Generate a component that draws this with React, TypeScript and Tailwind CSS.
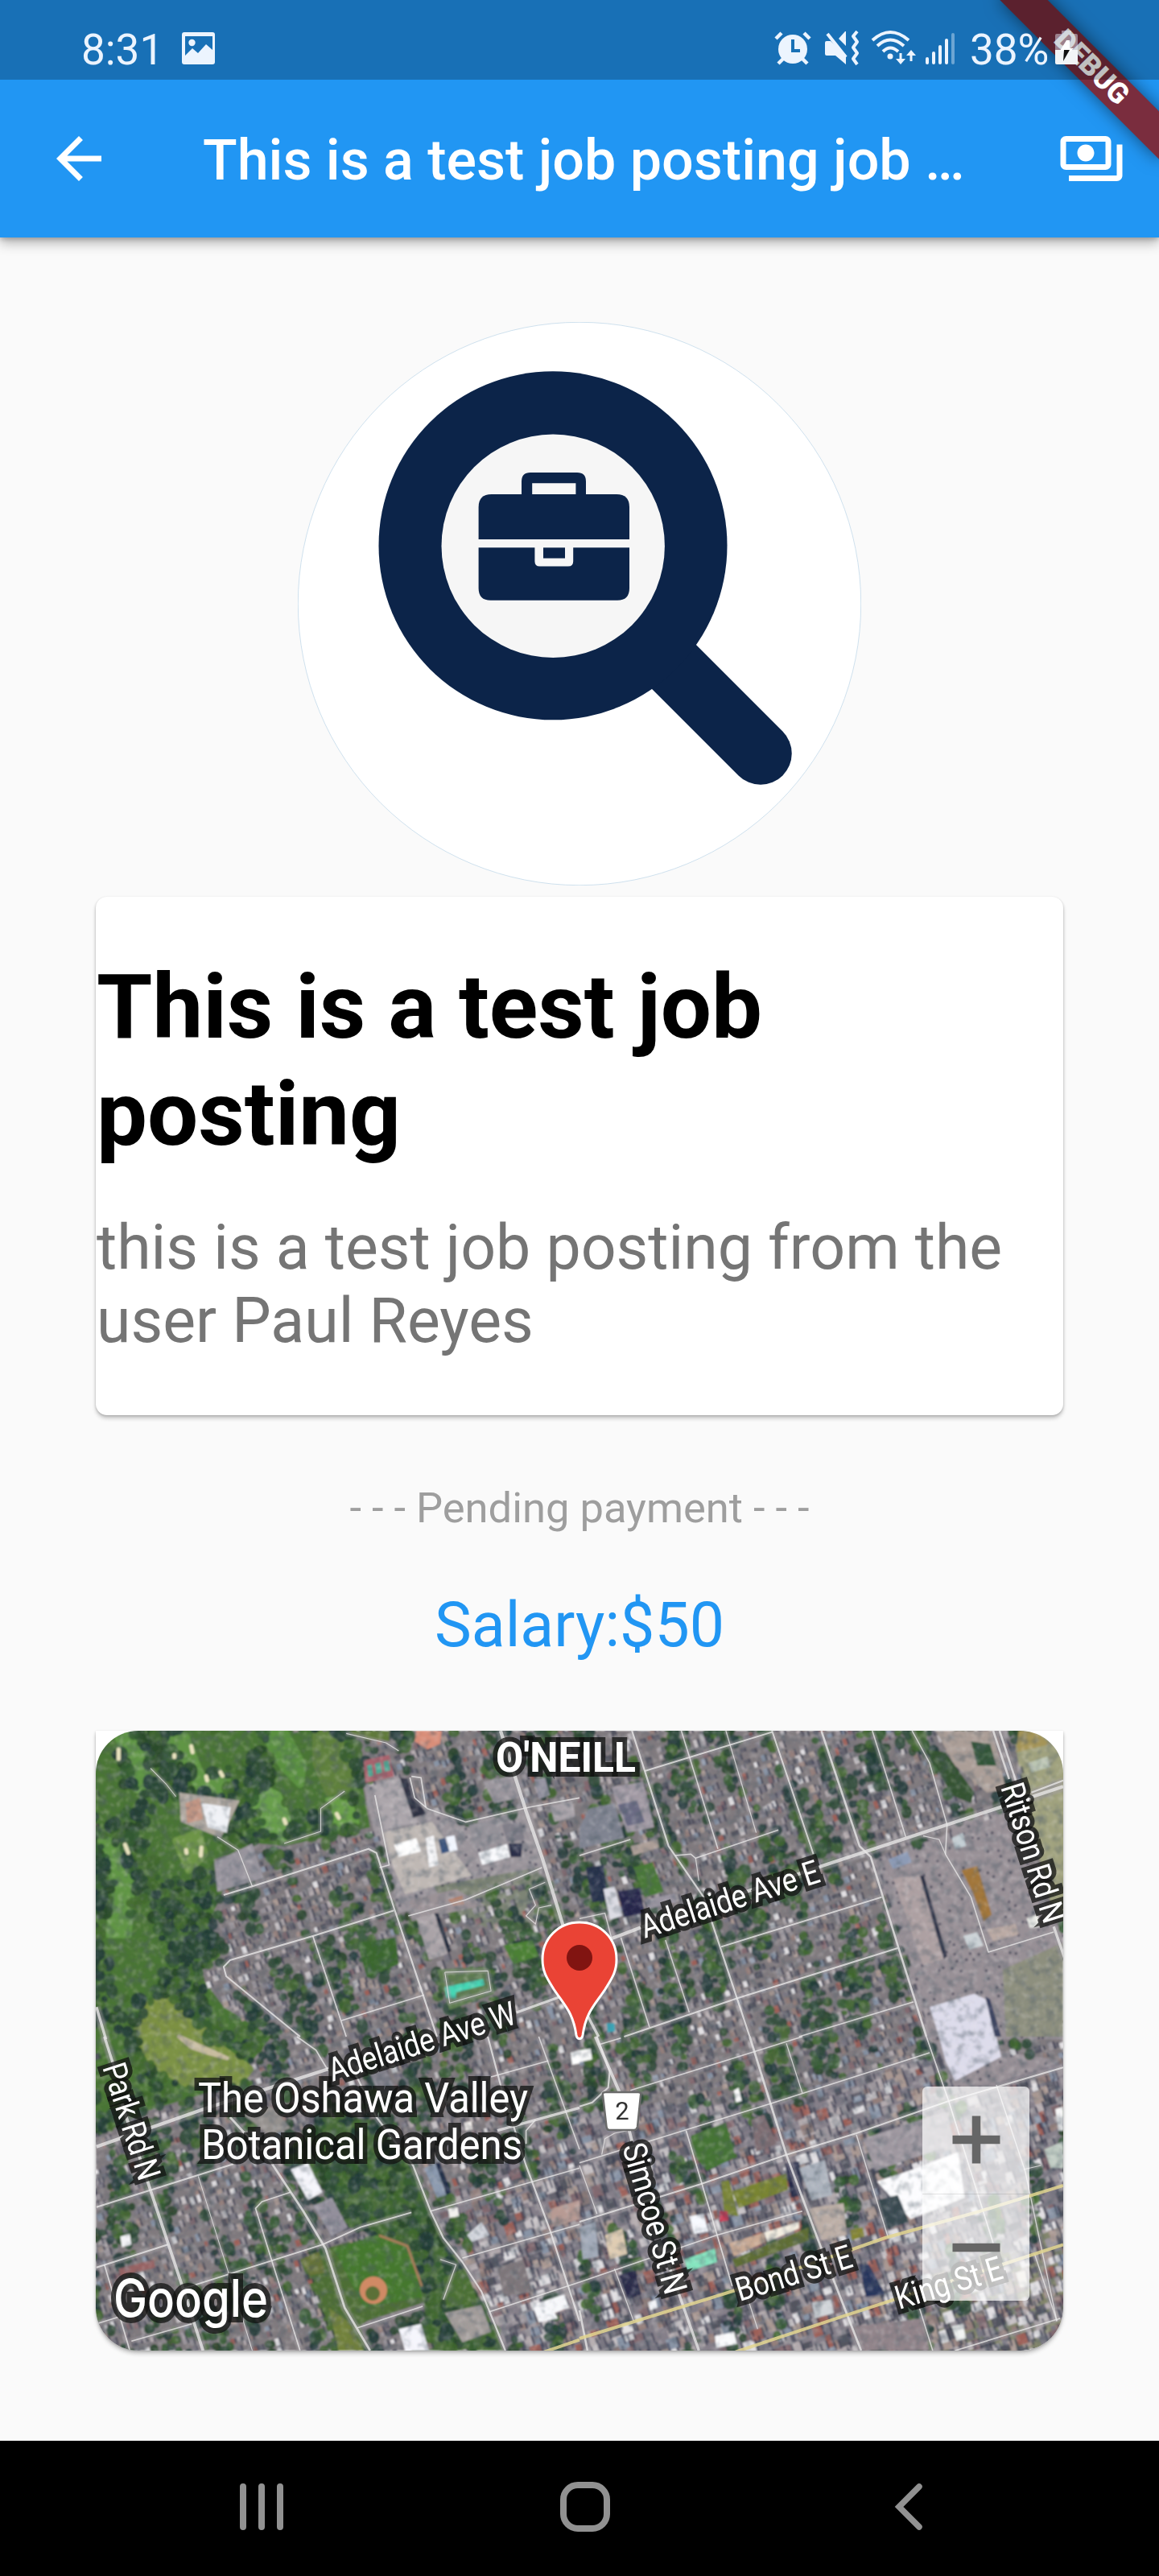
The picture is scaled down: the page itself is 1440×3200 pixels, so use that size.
import React from "react";

type Pt = [number, number];

const MAP = { x: 119, y: 2150, w: 1202, h: 770 };

/* The map is surveyed in four sheets, each with its own local grid. */
const SX = 1 / 2.529;
const SY = 1 / 3;
const SHEETS = {
  nw: [100, 2130],
  ne: [720, 2130],
  sw: [100, 2530],
  se: [720, 2530],
} as const;
type SheetId = keyof typeof SHEETS;

const place = (sheet: SheetId, pts: string): Pt[] =>
  pts.split(" ").map((p) => {
    const [x, y] = p.split(",").map(Number);
    return [SHEETS[sheet][0] + x * SX, SHEETS[sheet][1] + y * SY];
  });

const join = (pts: Pt[]) => pts.map((p) => p[0].toFixed(1) + "," + p[1].toFixed(1)).join(" ");

const inside = ([x, y]: Pt, poly: Pt[]) => {
  let hit = false;
  for (let i = 0, j = poly.length - 1; i < poly.length; j = i++) {
    const [xi, yi] = poly[i];
    const [xj, yj] = poly[j];
    if (yi > y !== yj > y && x < ((xj - xi) * (y - yi)) / (yj - yi) + xi) hit = !hit;
  }
  return hit;
};

const random = (seed: number) => () => {
  seed = (seed * 1664525 + 1013904223) >>> 0;
  return seed / 4294967296;
};

const golf: Pt[] = [
  ...place("nw", "40,50 860,50 885,250 910,420 640,490 560,480 420,540 440,680 400,780 440,900 370,960 450,1090 600,1200"),
  ...place("sw", "560,60 480,180 200,280 40,380"),
];
const creek = place("sw", "640,440 740,300 930,310 1050,480 1100,650 1190,840 1280,1030 1330,1170 1090,1170 1080,1000 1060,860 940,740 840,710 760,560");
const ballpark = place("sw", "690,830 770,790 930,735 1040,790 1080,990 900,1060 880,1080 900,1170 800,1170");
const plaza: Pt[] = [...place("ne", "920,540 1150,450 1160,410 1380,330 1420,600 1520,830 1520,1210 1090,1210"), ...place("se", "1520,90 1170,230 1090,0")];
const field = place("ne", "1360,50 1530,50 1530,800 1480,700 1400,330");
const schools = place("nw", "890,260 1020,230 1090,350 1210,400 1410,345 1450,530 1460,570 1230,660 1000,740 920,430");
const drab = place("se", "1060,900 1530,700 1530,1180 1110,1180");
const downtown: Pt[] = [...place("se", "0,260 560,250 1090,60 1530,100 1530,1180 0,1180"), ...place("sw", "1300,1170 1200,840 1100,650")];
const court = place("nw", "1110,640 1440,570 1500,770 1360,830 1160,740");

const FAIRWAY_SHAPES: [string, string][] = [
  ["110,60 180,80 215,200 215,260 180,280 150,180", "#5f9544"],
  ["570,60 640,60 700,190 690,260 640,200", "#5a9040"],
  ["740,70 800,60 845,180 840,270 780,290 740,180", "#5f803d"],
  ["255,60 330,80 380,230 460,240 455,290 370,270 300,120", "#619545"],
  ["560,270 620,300 650,390 640,460 590,440 550,350", "#689e4c"],
  ["780,320 840,320 865,400 810,430 775,390", "#689f47"],
  ["60,450 130,500 160,640 150,820 90,820 110,640", "#609544"],
  ["300,470 370,440 390,520 340,580", "#6d9446"],
  ["210,1080 270,1060 330,1120 420,1200 170,1200", "#7c9042"],
];
const MEADOW_SHAPES: [string, string][] = [
  ["170,0 400,0 540,120 500,180 330,180 230,110", "#7c9244"],
  ["310,0 460,80 400,60 350,40", "#c8bc9f"],
];
const meadows = [
  ...FAIRWAY_SHAPES.map(([pts]) => place("nw", pts)),
  ...MEADOW_SHAPES.map(([pts]) => place("sw", pts)),
];

const ROOFS = ["#9c969c", "#7a7782", "#b3aaad", "#65636e", "#947f7b", "#53545f", "#a99892", "#c6c1c4", "#82696f", "#8994a6", "#e2e0e3", "#9d6058"];
const LEAVES = ["#264429", "#345c31", "#1f3836", "#42692f", "#2c4a36"];

function scatter() {
  const rnd = random(77);
  const roofs: string[] = ROOFS.map(() => "");
  const leaves: string[] = LEAVES.map(() => "");
  const shade: string[] = [""];
  const a = (-18.5 * Math.PI) / 180;
  const c = Math.cos(a);
  const s = Math.sin(a);
  const blob = (x: number, y: number, r: number, k: number) => {
    const r2 = r * (0.7 + rnd() * 0.6);
    leaves[k] += `M${(x - r).toFixed(1)} ${y.toFixed(1)}a${r.toFixed(1)} ${r2.toFixed(1)} 0 1 0 ${(2 * r).toFixed(1)} 0a${r.toFixed(1)} ${r2.toFixed(1)} 0 1 0 ${(-2 * r).toFixed(1)} 0`;
  };
  for (let u = -760; u < 760; u += 9) {
    for (let v = -640; v < 640; v += 11) {
      const ju = u + rnd() * 6;
      const jv = v + rnd() * 8;
      const x = 720 + ju * c - jv * s;
      const y = 2535 + ju * s + jv * c;
      if (x < 112 || x > 1328 || y < 2142 || y > 2928) continue;
      const p: Pt = [x, y];
      const patch = Math.sin(ju / 9 + Math.sin(jv / 60) * 1.5) + Math.sin(jv / 31 + ju / 53) * 0.9;
      if (inside(p, golf)) {
        if (meadows.some((m) => inside(p, m))) continue;
        const wood = Math.sin(x / 21 + y / 60) + Math.sin(y / 27 - x / 50) + (y > 2330 && x > 190 ? 0.9 : 0);
        if (wood + rnd() * 0.9 > 0.45) blob(x, y, 4 + rnd() * 6, Math.floor(rnd() * 5));
        continue;
      }
      if (inside(p, ballpark) || inside(p, field)) continue;
      if (inside(p, creek)) {
        if (rnd() < 0.72) blob(x, y, 4 + rnd() * 6, Math.floor(rnd() * 5));
        continue;
      }
      if (inside(p, plaza) || inside(p, schools)) {
        if (rnd() < 0.35) shade[0] += `M${x.toFixed(1)} ${y.toFixed(1)}l3 -1l1 3l-3 1z`;
        continue;
      }
      const urban = inside(p, downtown);
      const k = Math.floor(Math.pow(rnd(), 1.5) * ROOFS.length);
      const w = (urban ? 6 : 3.5) + rnd() * (urban ? 9 : 3.5);
      const h = (urban ? 7 : 5) + rnd() * (urban ? 9 : 5);
      if (rnd() < 0.8) {
        roofs[k] += `M${x.toFixed(1)} ${y.toFixed(1)}l${(w * c).toFixed(1)} ${(w * s).toFixed(1)}l${(-h * s).toFixed(1)} ${(h * c).toFixed(1)}l${(-w * c).toFixed(1)} ${(-w * s).toFixed(1)}z`;
        shade[0] += `M${(x + w * c).toFixed(1)} ${(y + w * s).toFixed(1)}l2.4 -.6l${(-h * s).toFixed(1)} ${(h * c).toFixed(1)}l-2.4 .6z`;
      }
      const green = inside(p, court) ? 0.3 : urban ? 1.6 : inside(p, drab) ? 1.2 : 0.6;
      if (patch + rnd() * 0.8 > green) blob(x + 3, y + 3, 3.5 + rnd() * 4.5, Math.floor(rnd() * 5));
    }
  }
  return { roofs, leaves, shade };
}

const TEXTURE = scatter();

type Area = [SheetId, string, string];

const AREAS: Area[] = [
  ["nw", "840,60 970,60 970,100 880,90", "#617a3b"],
  ["nw", "1055,60 1135,60 1130,110 1090,130 1050,100", "#d98e79"],
  ["nw", "890,170 970,150 985,230 895,255", "#a8636d"],
  ["nw", "900,190 915,185 920,228 905,232", "#4fa592"],
  ["nw", "925,182 942,178 948,215 930,222", "#4fa592"],
  ["nw", "952,174 968,170 974,208 956,213", "#4fa592"],
  ["nw", "915,265 1010,235 1060,400 955,430", "#aca6ab"],
  ["nw", "1003,235 1030,238 1085,370 1045,385", "#2f3142"],
  ["nw", "310,290 500,320 460,420 440,460 400,440 315,400", "#afa79f"],
  ["nw", "380,330 472,345 460,440 400,420", "#f1f3f7"],
  ["nw", "330,330 375,310 385,390 335,405", "#c39684"],
  ["nw", "420,550 540,480 575,610 430,660", "#98949d"],
  ["nw", "945,440 1105,400 1230,600 1020,670 980,560", "#bfb8b4"],
  ["nw", "985,485 1055,460 1070,510 1000,530", "#ffffff"],
  ["nw", "1085,460 1110,450 1125,560 1095,570", "#f8f8fa"],
  ["nw", "1125,465 1145,460 1160,510 1135,518", "#38527e"],
  ["nw", "1148,455 1175,450 1185,505 1160,512", "#f2f6ff"],
  ["nw", "1250,515 1340,482 1350,530 1262,560", "#fafbfe"],
  ["nw", "1345,480 1388,480 1385,530 1352,530", "#2b2e49"],
  ["nw", "1325,410 1385,400 1395,465 1340,475", "#807e88"],
  ["nw", "1220,410 1310,390 1330,470 1240,500", "#959299"],
  ["nw", "1265,250 1360,225 1385,310 1300,330", "#9b969d"],
  ["nw", "1425,240 1460,235 1475,300 1440,315", "#9493a0"],
  ["nw", "1475,340 1545,320 1555,380 1490,400", "#a9a3a9"],
  ["nw", "1035,690 1180,650 1270,710 1040,770", "#9b9296"],
  ["nw", "1155,690 1200,675 1205,705 1170,712", "#b57f68"],
  ["nw", "1055,755 1110,740 1155,890 1095,915", "#aaa3a7"],
  ["nw", "1112,740 1125,740 1165,880 1155,890", "#232a3c"],
  ["nw", "1330,860 1420,840 1440,900 1360,930", "#4c8034"],
  ["nw", "1120,950 1270,940 1300,1040 1160,1100", "#5e7c50"],
  ["nw", "1145,1015 1265,985 1270,1008 1180,1035 1180,1058 1150,1055", "#44d6b4"],
  ["nw", "870,850 990,830 1000,930 900,980", "#3a662e"],
  ["ne", "100,270 200,250 235,420 150,440", "#a199a3"],
  ["ne", "120,335 180,320 205,400 150,415", "#6a6b83"],
  ["ne", "30,350 110,330 140,460 0,500 0,420", "#808491"],
  ["ne", "20,570 75,560 90,690 40,700", "#26304a"],
  ["ne", "120,660 190,645 205,740 140,755", "#25254a"],
  ["ne", "75,650 110,640 135,750 95,765", "#dcdce4"],
  ["ne", "170,570 230,550 265,660 205,680", "#4a7837"],
  ["ne", "205,690 300,665 305,700 215,725", "#9a95a0"],
  ["ne", "160,490 245,465 250,495 170,525", "#ab9d96"],
  ["ne", "1120,60 1300,60 1340,280 1280,290 1180,190", "#ab9e97"],
  ["ne", "1090,130 1150,140 1240,290 1230,330 1170,300", "#355332"],
  ["ne", "1230,100 1290,110 1310,190 1250,190", "#335539"],
  ["ne", "1410,180 1470,155 1480,195 1420,215", "#bbc5b2"],
  ["ne", "1380,60 1430,60 1480,110 1370,140", "#a59558"],
  ["ne", "970,540 1030,510 1045,550 985,575", "#8d9bb6"],
  ["ne", "985,610 1070,600 1145,910 1080,935", "#ada0a2"],
  ["ne", "1070,600 1082,600 1155,900 1145,912", "#2b3045"],
  ["ne", "1200,580 1250,565 1295,745 1270,770 1235,660", "#a1763a"],
  ["ne", "1170,460 1205,440 1215,490 1180,500", "#c3ced3"],
  ["ne", "1205,825 1250,810 1270,860 1225,875", "#ccd3d7"],
  ["ne", "1280,800 1370,780 1380,820 1300,845", "#bbaaa4"],
  ["ne", "1405,760 1440,745 1445,790 1415,795", "#f6f6f0"],
  ["ne", "1100,1090 1240,1040 1275,1060 1320,1200 1130,1200", "#dddceb"],
  ["ne", "1275,1050 1290,1060 1325,1200 1305,1200", "#3d4461"],
  ["ne", "1330,950 1520,850 1520,1200 1340,1200", "#8d8f7e"],
  ["ne", "85,1150 110,1150 112,1180 88,1185", "#3aa3b5"],
  ["sw", "660,495 715,470 760,580 715,610", "#f6f6fc"],
  ["sw", "730,630 790,600 840,710 790,745", "#938f9b"],
  ["sw", "510,290 600,260 660,340 600,370", "#95918e"],
  ["sw", "910,140 960,120 990,200 940,220", "#807f89"],
  ["sw", "1080,490 1120,470 1150,590 1120,600", "#8c9aaf"],
  ["sw", "1115,470 1130,470 1165,580 1150,590", "#1f2b46"],
  ["sw", "795,790 930,740 1030,780 1075,970 890,1010", "#45782e"],
  ["sw", "120,865 230,830 235,860 125,895", "#966364"],
  ["sw", "125,745 155,735 160,775 130,785", "#f4f4f7"],
  ["sw", "1145,1030 1260,1000 1290,1100 1200,1140", "#a29c9a"],
  ["sw", "1140,900 1210,860 1250,990 1150,1010", "#4c7034"],
  ["sw", "1000,1090 1070,1070 1095,1170 1020,1170", "#f6f6fd"],
  ["sw", "690,830 750,800 770,880 720,890", "#667338"],
  ["sw", "780,1010 840,1060 890,1170 810,1170", "#71813b"],
  ["sw", "1420,1000 1520,960 1535,1010 1490,1030 1500,1050 1440,1065", "#f8f9fc"],
  ["sw", "1215,740 1260,690 1285,740 1230,765", "#d5d8df"],
  ["sw", "1310,860 1390,830 1420,950 1330,970", "#7d767a"],
  ["sw", "1155,640 1185,635 1190,670 1160,675", "#f4f2ef"],
  ["sw", "1205,320 1228,315 1232,345 1210,350", "#f3eeea"],
  ["sw", "1480,640 1568,610 1568,680 1480,710", "#b79a93"],
  ["sw", "1540,60 1568,50 1568,100 1545,105", "#ffffff"],
  ["se", "0,50 35,45 40,85 0,95", "#fafafa"],
  ["se", "485,200 500,190 510,240 492,245", "#fafafa"],
  ["se", "350,370 460,320 490,450 400,500 350,430", "#457334"],
  ["se", "540,310 580,290 620,400 555,430", "#7e6d72"],
  ["se", "645,470 690,465 705,590 665,600", "#242846"],
  ["se", "690,490 770,460 795,590 730,610", "#adb4be"],
  ["se", "445,540 470,535 500,670 455,660", "#798437"],
  ["se", "480,575 650,510 655,570 500,640", "#798431"],
  ["se", "440,650 465,650 468,685 440,690", "#c52f4a"],
  ["se", "470,770 580,730 585,765 485,820", "#cbab95"],
  ["se", "580,730 690,690 690,715 590,765", "#f5efe2"],
  ["se", "480,830 720,710 720,760 490,860", "#5e6d34"],
  ["se", "330,830 425,790 432,840 340,875", "#86e6c0"],
  ["se", "345,670 390,660 405,725 360,735", "#f8faff"],
  ["se", "80,740 135,715 150,810 95,830", "#dfccb2"],
  ["se", "120,890 175,870 195,960 150,980", "#2a2b49"],
  ["se", "0,710 50,690 60,820 10,830", "#a4acba"],
  ["se", "890,380 1150,280 1180,400 930,500", "#9f98a0"],
  ["se", "935,540 1060,490 1190,430 1210,600 1040,680", "#fdfdff"],
  ["se", "935,610 1000,590 1035,690 960,720", "#39494f"],
  ["se", "720,640 830,620 840,740 760,760", "#bcaea6"],
  ["se", "850,720 890,710 895,745 855,760", "#858636"],
  ["se", "860,1080 1080,1050 1100,1170 890,1170", "#91848a"],
  ["se", "730,990 790,980 800,1030 740,1050", "#d1d5d9"],
  ["se", "425,1115 485,1100 495,1145 430,1160", "#fafbfd"],
  ["se", "1170,1080 1205,1070 1215,1125 1185,1135", "#f3f5f3"],
  ["se", "1370,880 1400,870 1410,930 1385,935", "#e6e0d8"],
  ["se", "1460,420 1520,390 1520,490 1480,490", "#c0ccc3"],
  ["se", "1495,270 1520,260 1520,350 1505,350", "#f8f8f8"],
  ["se", "1130,0 1310,0 1325,75 1180,165 1150,90", "#dddceb"],
  ["se", "215,990 240,980 245,1010 222,1020", "#f3f5f9"],
  ["se", "880,850 910,850 960,960 900,970", "#28355c"],
];

const BUNKERS = ["295,150 295,158", "348,118 352,140", "395,230 398,245", "440,215 446,228", "640,390 645,405", "805,370 812,385", "332,505 333,515", "380,495 378,525", "120,130 120,165", "140,485 150,515"];

type Road = [SheetId, number, string];

const ROADS: Road[] = [
  ["nw", 5, "1320,60 1400,360 1450,530 1520,800"],
  ["nw", 2.6, "450,672 540,640 905,500 930,515 985,720 1075,1040 1120,1200"],
  ["nw", 2, "1035,235 1050,310 1090,350 1210,400 1410,345 1568,310"],
  ["nw", 2, "1040,230 1070,235 1085,345"],
  ["nw", 2.4, "985,730 730,825 470,915 450,940 458,975 690,1200"],
  ["nw", 2, "730,825 835,1200"],
  ["nw", 2, "820,1140 1080,1045"],
  ["nw", 2, "1030,750 1210,690 1450,570"],
  ["nw", 1.5, "540,640 495,505 430,455"],
  ["nw", 3.6, "1370,1110 1510,1050"],
  ["nw", 4, "50,1090 80,1210"],
  ["nw", 1.2, "640,480 755,435 755,350 830,285"],
  ["nw", 1.2, "220,200 270,260 300,305"],
  ["nw", 1.4, "835,70 960,105 1000,135"],
  ["nw", 1.4, "1460,625 1410,650 1430,710 1400,750 1430,780 1440,720 1480,710"],
  ["nw", 1.2, "1145,960 1280,955 1290,1030 1160,1075 1145,960"],
  ["nw", 2, "925,300 970,560 940,570"],
  ["ne", 2.6, "165,60 205,210 280,490 390,680 490,1040 535,1200"],
  ["ne", 1.8, "320,60 435,500"],
  ["ne", 1.4, "460,60 555,440"],
  ["ne", 2.2, "205,210 605,65"],
  ["ne", 1.8, "300,525 350,520 365,535 625,430"],
  ["ne", 1.4, "365,535 375,620"],
  ["ne", 2.4, "605,60 735,520"],
  ["ne", 3, "760,60 880,490 915,530 1000,860 1090,1200"],
  ["ne", 1.8, "920,60 1025,455"],
  ["ne", 1.8, "1045,60 1100,180 1155,410 1150,520 1230,680 1285,885 1490,810"],
  ["ne", 1.4, "1080,452 1130,465 1150,520"],
  ["ne", 5, "100,835 200,790 760,565 1130,420 1520,268"],
  ["ne", 3, "1300,60 1350,240"],
  ["ne", 3, "1320,60 1372,250"],
  ["ne", 4, "1490,790 1525,910"],
  ["ne", 2.4, "1420,290 1520,245"],
  ["ne", 2.2, "445,865 950,680"],
  ["ne", 2.6, "140,1200 500,1055 1000,870"],
  ["ne", 2, "690,1200 1050,1070"],
  ["ne", 1.8, "130,830 220,1165"],
  ["ne", 1.6, "270,840 345,1110"],
  ["ne", 1.6, "0,760 80,740 100,830"],
  ["ne", 1.6, "0,525 160,465"],
  ["ne", 4, "20,1110 60,1200"],
  ["sw", 4, "75,0 105,110"],
  ["sw", 4.5, "130,250 320,930 385,1170"],
  ["sw", 5, "50,410 400,265 780,120"],
  ["sw", 4, "1310,350 1568,265"],
  ["sw", 2, "680,0 740,50 775,120"],
  ["sw", 3.2, "470,300 600,470 700,650 770,790 830,1010 910,1170"],
  ["sw", 2.4, "50,635 480,475"],
  ["sw", 2.6, "50,860 275,775"],
  ["sw", 2.2, "320,940 760,775 880,710 1040,655"],
  ["sw", 2, "660,580 570,615 550,640 600,830 690,1170"],
  ["sw", 1.2, "370,520 465,880 540,1170"],
  ["sw", 2, "75,850 155,1170"],
  ["sw", 1.8, "50,1070 120,1045"],
  ["sw", 1.8, "160,1135 350,1070"],
  ["sw", 2.6, "860,130 930,300 1045,480 1100,650 1140,750 1200,840 1260,950 1335,1170"],
  ["sw", 2, "1100,650 1568,490"],
  ["sw", 2, "1200,825 1568,700"],
  ["sw", 2, "1285,1025 1568,915"],
  ["sw", 2.6, "1280,0 1320,180 1400,480 1475,720 1568,1060"],
  ["sw", 1.8, "1440,0 1568,420"],
  ["sw", 1.8, "1290,150 1470,90"],
  ["sw", 2, "1400,400 1400,350 1430,310"],
  ["sw", 1.8, "870,1085 1075,1005"],
  ["sw", 1.4, "1130,830 1180,850 1140,980"],
  ["se", 2.6, "55,0 95,130 90,190 40,245 0,260"],
  ["se", 4.5, "50,0 125,205 165,390"],
  ["se", 4, "280,850 375,1170"],
  ["se", 2, "60,30 130,5"],
  ["se", 2, "160,200 700,0"],
  ["se", 2, "0,470 600,250 1100,60"],
  ["se", 3.2, "535,0 650,440 760,790 885,1170"],
  ["se", 1.4, "650,25 700,210"],
  ["se", 2.4, "0,690 380,550 650,440 870,360 1160,240 1520,115"],
  ["se", 2, "0,915 430,740 700,650"],
  ["se", 2, "335,350 480,930"],
  ["se", 1.4, "0,480 55,660"],
  ["se", 1.4, "110,865 170,1060"],
  ["se", 1.6, "870,365 970,750"],
  ["se", 2, "1090,0 1160,240 1300,770"],
  ["se", 1.6, "1310,180 1400,500 1500,1060"],
  ["se", 1.8, "1060,980 1110,1170"],
  ["se", 2, "1180,1170 1510,1050"],
  ["se", 1.6, "1430,810 1500,1060"],
  ["se", 3, "0,1020 25,1170"],
  ["se", 1.4, "1395,495 1450,480"],
  ["se", 1.4, "70,440 80,380 110,360 150,350"],
  ["se", 1.4, "530,980 560,1090"],
];

const HIGHWAYS: Road[] = [
  ["sw", 4, "1450,1178 1568,1130"],
  ["se", 4, "0,1125 490,945 960,750 1260,650 1520,555"],
  ["se", 4, "490,1175 820,1045 1430,810 1520,775"],
];

type LabelProps = { x: number; y: number; size: number; len: number; turn?: number; weight?: number; font?: string; halo?: number; children: string };

function Label({ x, y, size, len, turn = 0, weight = 400, font = "Roboto, sans-serif", halo = 12, children }: LabelProps) {
  return (
    <text
      transform={`translate(${x} ${y}) rotate(${turn})`}
      fontFamily={font}
      fontSize={size}
      fontWeight={weight}
      textLength={len}
      lengthAdjust="spacingAndGlyphs"
      fill="#fff"
      stroke="rgba(16,18,16,0.74)"
      strokeWidth={halo}
      strokeLinejoin="miter"
      paintOrder="stroke"
    >
      {children}
    </text>
  );
}

function SatelliteMap() {
  return (
    <svg viewBox={`${MAP.x} ${MAP.y} ${MAP.w} ${MAP.h}`} className="block h-full w-full" role="img" aria-label="Map">
      <defs>
        <filter id="soft" x="0" y="0" width="100%" height="100%">
          <feGaussianBlur stdDeviation="0.9" />
        </filter>
        <filter id="grain" x="0" y="0" width="100%" height="100%">
          <feTurbulence type="fractalNoise" baseFrequency="0.09" numOctaves="3" seed="8" />
          <feColorMatrix values="0 0 0 0 0.08  0 0 0 0 0.11  0 0 0 0 0.14  2.6 0 0 0 -1.2" />
        </filter>
        <filter id="glint" x="0" y="0" width="100%" height="100%">
          <feTurbulence type="fractalNoise" baseFrequency="0.13" numOctaves="3" seed="21" />
          <feColorMatrix values="0 0 0 0 0.86  0 0 0 0 0.82  0 0 0 0 0.82  0 3 0 0 -1.5" />
        </filter>
      </defs>
      <g filter="url(#soft)">
        <rect x={MAP.x} y={MAP.y} width={MAP.w} height={MAP.h} fill="#807a7e" />
        <polygon points={join(downtown)} fill="#857f89" />
        <polygon points={join(drab)} fill="#83866c" />
        <polygon points={join(golf)} fill="#4a7434" />
        <polygon points={join(creek)} fill="#4b6d3b" />
        <polygon points={join(ballpark)} fill="#4e6e35" />
        <polygon points={join(plaza)} fill="#989096" />
        <polygon points={join(field)} fill="#a0a27e" />
        <polygon points={join(schools)} fill="#9b959b" />
        <polygon points={join(court)} fill="#7d8474" />
        {FAIRWAY_SHAPES.map(([pts, fill], i) => (
          <polygon key={i} points={join(place("nw", pts))} fill={fill} stroke={fill} strokeWidth={9} strokeLinejoin="round" />
        ))}
        {MEADOW_SHAPES.map(([pts, fill], i) => (
          <polygon key={i} points={join(place("sw", pts))} fill={fill} stroke={fill} strokeWidth={5} strokeLinejoin="round" />
        ))}
        {TEXTURE.roofs.map((d, i) => (
          <path key={i} d={d} fill={ROOFS[i]} />
        ))}
        <path d={TEXTURE.shade[0]} fill="#2a2d42" opacity={0.6} />
        {TEXTURE.leaves.map((d, i) => (
          <path key={i} d={d} fill={LEAVES[i]} opacity={0.85} />
        ))}
        {AREAS.map(([sheet, pts, fill], i) => (
          <polygon key={i} points={join(place(sheet, pts))} fill={fill} />
        ))}
        <rect x={MAP.x} y={MAP.y} width={MAP.w} height={MAP.h} filter="url(#grain)" opacity={0.5} />
        <rect x={MAP.x} y={MAP.y} width={MAP.w} height={MAP.h} filter="url(#glint)" opacity={0.25} />
        <circle cx="464" cy="2845" r="17" fill="#d08a65" />
        <circle cx="463" cy="2849" r="9" fill="#5b7038" />
        <path d="M471 2777 L506 2790 L524 2840" fill="none" stroke="#a67d5b" strokeWidth="3" />
        {BUNKERS.map((p) => (
          <polyline key={p} points={join(place("nw", p))} stroke="#e9e3bf" strokeWidth="5" strokeLinecap="round" />
        ))}
      </g>
      <g fill="none" strokeLinejoin="round" filter="url(#soft)">
        {ROADS.map(([sheet, w, pts], i) => (
          <polyline key={i} points={join(place(sheet, pts))} stroke="#a29da2" strokeWidth={w * 1.8 + 3} opacity={0.5} />
        ))}
      </g>
      <g fill="none" strokeLinejoin="round">
        {ROADS.map(([sheet, w, pts], i) => (
          <polyline key={i} points={join(place(sheet, pts))} stroke="#e9e8e8" strokeWidth={w * 0.85} opacity={0.78} />
        ))}
        {HIGHWAYS.map(([sheet, w, pts], i) => (
          <polyline key={i} points={join(place(sheet, pts))} stroke="#e3d690" strokeWidth={w} opacity={0.85} />
        ))}
      </g>

      <Label x={616} y={2200.5} size={52} len={174} weight={700}>O'NEILL</Label>
      <Label x={413} y={2586} size={41} len={242} turn={-17.5}>Adelaide Ave W</Label>
      <Label x={801} y={2408} size={41} len={231} turn={-17.8}>Adelaide Ave E</Label>
      <Label x={1243} y={2220} size={41} len={180} turn={72.4}>Ritson Rd N</Label>
      <Label x={127} y={2568} size={41} len={150} turn={72.2}>Park Rd N</Label>
      <Label x={773} y={2667} size={41} len={193} turn={73.8}>Simcoe St N</Label>
      <Label x={919} y={2859} size={41} len={149} turn={-17}>Bond St E</Label>
      <Label x={1117} y={2869} size={41} len={137} turn={-16.6}>King St E</Label>
      <Label x={246} y={2624} size={52} len={410}>The Oshawa Valley</Label>
      <Label x={250} y={2682} size={52} len={399}>Botanical Gardens</Label>
      <Label x={141} y={2878} size={64} len={192} weight={500} font="Inter, sans-serif" halo={14}>Google</Label>

      <path d="M752 2599 H793 Q797 2599 796 2603 L792 2642 Q791 2646 788 2646 H757 Q754 2646 753.500 2642 L749 2603 Q748 2599 752 2599Z" fill="#fff" stroke="#6b6b6b" strokeWidth="2.5" />
      <text x="773" y="2633" fontFamily="Roboto, sans-serif" fontSize="31" textAnchor="middle" fill="#333">2</text>

      <path
        d="M720 2388 C694 2388 674 2408 674 2434 C674 2450 680 2458 688 2471 C702 2492 712 2500 716 2528 C717 2534 723 2534 724 2528 C728 2500 738 2492 752 2471 C760 2458 766 2450 766 2434 C766 2408 746 2388 720 2388Z"
        fill="#ea4335"
        stroke="#fff"
        strokeWidth="3"
      />
      <circle cx="720" cy="2432" r="16" fill="#811411" />
    </svg>
  );
}

function StatusIcons() {
  return (
    <svg viewBox="955 34 238 50" className="h-[50px] w-[238px]" fill="#ecf4fe" stroke="none">
      {/* alarm */}
      <circle cx="985" cy="61" r="18" />
      <path d="M985 49v14h9" fill="none" stroke="#1971b6" strokeWidth="4" />
      <path d="M964 48l7-7M1006 48l-7-7" fill="none" stroke="#ecf4fe" strokeWidth="4.500" />
      <path d="M973 73l-6 6M997 73l6 6" fill="none" stroke="#ecf4fe" strokeWidth="4.500" />
      {/* vibrate */}
      <path d="M1025 53q0-2 2-2h5l19 17v12l-13-11h-11q-2 0-2-2zM1042 48l8-9h1v18z" />
      <path d="M1028 42l23 29" fill="none" stroke="#ecf4fe" strokeWidth="4" />
      <path d="M1065 39l-5 6 5 7-5 7 5 7-5 7 5 7" fill="none" stroke="#ecf4fe" strokeWidth="4" strokeLinejoin="round" />
      {/* wifi */}
      <g fill="none" stroke="#ecf4fe" strokeWidth="4">
        <path d="M1084 50q22-20 45 0M1090 57q16-15 33 0M1097 64q9-9 19 0" />
        <path d="M1119 66v10M1132 76V66" strokeWidth="3" />
      </g>
      <circle cx="1106" cy="70" r="3.500" />
      <path d="M1113 73h12l-6 7zM1126 69h12l-6-7z" />
      {/* signal */}
      <rect x="1150" y="71" width="4" height="9" rx="2" />
      <rect x="1158" y="64" width="4" height="16" rx="2" />
      <rect x="1166" y="56" width="4" height="24" rx="2" />
      <rect x="1174" y="48" width="4" height="32" rx="2" />
      <rect x="1182" y="41" width="4" height="39" rx="2" opacity=".4" />
    </svg>
  );
}

function StatusBar() {
  return (
    <div className="relative z-20 flex h-[99px] items-start justify-between bg-black/25 pr-[101px] pl-[101px] text-[53px] leading-[50px] text-[#ecf4fe]">
      <div className="flex pt-[37px]">
        <span className="w-[102px] whitespace-nowrap">8:31</span>
        <svg viewBox="0 0 41 40" className="mt-[3px] ml-[23px] h-[40px] w-[41px]">
          <path fillRule="evenodd" fill="#ecf4fe" d="M3 0h35q3 0 3 3v34q0 3-3 3H3q-3 0-3-3V3q0-3 3-3zM4 5v24l9-9 7 6 10-11 8 7V5z" />
          <circle cx="12.500" cy="13" r="4.200" fill="#ecf4fe" />
        </svg>
      </div>
      <div className="flex pt-[37px]">
        <div className="mt-[-3px] mr-[12px]"><StatusIcons /></div>
        <span className="w-[106px] whitespace-nowrap">38%</span>
        <svg viewBox="0 0 28 42" className="mt-[1px] h-[42px] w-[28px]">
          <path d="M8 0h12v4h6q2 0 2 2v18H0V6q0-2 2-2h6z" fill="#ecf4fe" opacity=".45" />
          <path d="M0 24h28v16q0 2-2 2H2q-2 0-2-2z" fill="#f2f4f6" />
          <path d="M14 12L6 25h8l-1 1h6l4-4h-5V12z" fill="#fff" />
          <path d="M11 24h7l-8 14z" fill="#111" />
        </svg>
      </div>
    </div>
  );
}

function DebugBanner() {
  return (
    <div className="absolute top-0 right-0 z-10 h-[320px] w-[320px] overflow-hidden">
      <div className="absolute top-[63px] right-[-56px] flex h-[42px] w-[280px] rotate-45 items-center justify-center bg-[#8d1616]/82 text-[35.7px] leading-none font-black text-white shadow-[0_0_21px_rgba(0,0,0,0.5)]">
        DEBUG
      </div>
    </div>
  );
}

function AppHeader() {
  return (
    <header className="relative z-10 bg-[#2196f3] shadow-[0_7px_14px_rgba(0,0,0,0.28),0_2px_6px_rgba(0,0,0,0.2)]">
      <StatusBar />
      <DebugBanner />
      <div className="flex h-[196px] items-center pr-[42px] pl-[56px] text-white">
        <svg viewBox="0 0 24 24" className="h-[84px] w-[84px] shrink-0" fill="currentColor">
          <path d="M20 11H7.830l5.590-5.590L12 4l-8 8 8 8 1.410-1.410L7.830 13H20z" />
        </svg>
        <h1 className="ml-[112px] flex-1 pt-[4px] text-[70px] leading-[82px] font-medium whitespace-nowrap">This is a test job posting job …</h1>
        <svg viewBox="0 0 24 24" className="h-[84px] w-[84px] shrink-0" fill="currentColor">
          <path d="M19 14V6c0-1.100-.9-2-2-2H3c-1.100 0-2 .9-2 2v8c0 1.100.9 2 2 2h14c1.100 0 2-.9 2-2zm-2 0H3V6h14v8zm-7-7c-1.660 0-3 1.340-3 3s1.340 3 3 3 3-1.340 3-3-1.340-3-3-3zm13 0v11c0 1.100-.9 2-2 2H4v-2h17V7h2z" />
        </svg>
      </div>
    </header>
  );
}

function JobLogo() {
  return (
    <svg viewBox="370 400 700 700" className="h-[700px] w-[700px]">
      <circle cx="720" cy="750" r="349.700" fill="#fff" stroke="#c3d9ea" strokeWidth=".8" />
      <g fill="#0c2449">
        <path d="M838 829L945 936" stroke="#0c2449" strokeWidth="77.500" strokeLinecap="round" />
        <circle cx="687" cy="677.800" r="216.500" />
        <circle cx="687.200" cy="678.300" r="138.700" fill="#f6f6f6" />
        <path d="M648 614v-16q0-11 11-11h58q11 0 11 11v16h-12.600v-13.700h-54.200v13.700z" />
        <path d="M594.600 670v-40q0-16 16-16h155.400q16 0 16 16v40z" />
        <path d="M594.600 680.300h69.800v17q0 6.300 6.300 6.300h35.200q6.300 0 6.300-6.300v-17h69.800v50.500q0 15-15 15H609.600q-15 0-15-15z" />
        <rect x="675" y="680.300" width="27" height="13.200" />
      </g>
    </svg>
  );
}

function ZoomControls() {
  return (
    <div className="absolute top-[442px] right-[42px] flex h-[266px] w-[133px] flex-col rounded-[6px] bg-white/70">
      <button className="flex flex-1 items-center justify-center border-b border-black/10" aria-label="Zoom in">
        <svg viewBox="0 0 60 60" className="h-[60px] w-[60px]"><path d="M30 .5v59M.5 30h59" stroke="#666" strokeWidth="10.500" /></svg>
      </button>
      <button className="flex flex-1 items-center justify-center" aria-label="Zoom out">
        <svg viewBox="0 0 60 60" className="h-[60px] w-[60px]"><path d="M.5 30h59" stroke="#666" strokeWidth="10.500" /></svg>
      </button>
    </div>
  );
}

function NavigationBar() {
  return (
    <nav className="flex h-[168px] items-center bg-black pb-[4px] pl-[297px]">
      <svg viewBox="0 0 56 60" className="h-[60px] w-[56px]" stroke="#919191" strokeWidth="8" strokeLinecap="round">
        <path d="M5 5v50M28 5v50M51 5v50" />
      </svg>
      <div className="ml-[343px] h-[62px] w-[62px] rounded-[22px] border-[8px] border-[#919191]" />
      <svg viewBox="0 0 36 60" className="ml-[353px] h-[60px] w-[36px]" fill="none" stroke="#919191" strokeWidth="7.500" strokeLinecap="round">
        <path d="M31 5L6 30l25 25" />
      </svg>
    </nav>
  );
}

export default function App() {
  return (
    <div className="flex h-[3200px] w-[1440px] flex-col overflow-hidden bg-[#fafafa] font-[Roboto,sans-serif]">
      <AppHeader />
      <main className="flex flex-1 flex-col items-center px-[119px] pt-[105px]">
        <JobLogo />
        <section className="mt-[14px] h-[644px] w-full shrink-0 rounded-[14px] bg-white pt-[70px] pl-px shadow-[0_4px_5px_rgba(0,0,0,0.2),0_1px_3px_rgba(0,0,0,0.18)]">
          <h2 className="text-[112px] leading-[133px] font-bold text-black">
            This is a test job
            <br />
            posting
          </h2>
          <p className="mt-[55px] text-[77px] leading-[91px] text-[#757575]">
            this is a test job posting from the
            <br />
            user Paul Reyes
          </p>
        </section>
        <p className="mt-[84px] text-[52.5px] leading-[62px] whitespace-nowrap text-[#9e9e9e]">- - - Pending payment - - -</p>
        <p className="mt-[70px] text-[77px] leading-[91px] text-[#2196f3]">Salary:$50</p>
        <section className="relative mt-[85px] h-[770px] w-full shrink-0 rounded-b-[53px] bg-white shadow-[0_4px_5px_rgba(0,0,0,0.2),0_1px_3px_rgba(0,0,0,0.18)]">
          <div className="h-full w-full overflow-hidden rounded-[53px]">
            <SatelliteMap />
          </div>
          <ZoomControls />
        </section>
      </main>
      <NavigationBar />
    </div>
  );
}
